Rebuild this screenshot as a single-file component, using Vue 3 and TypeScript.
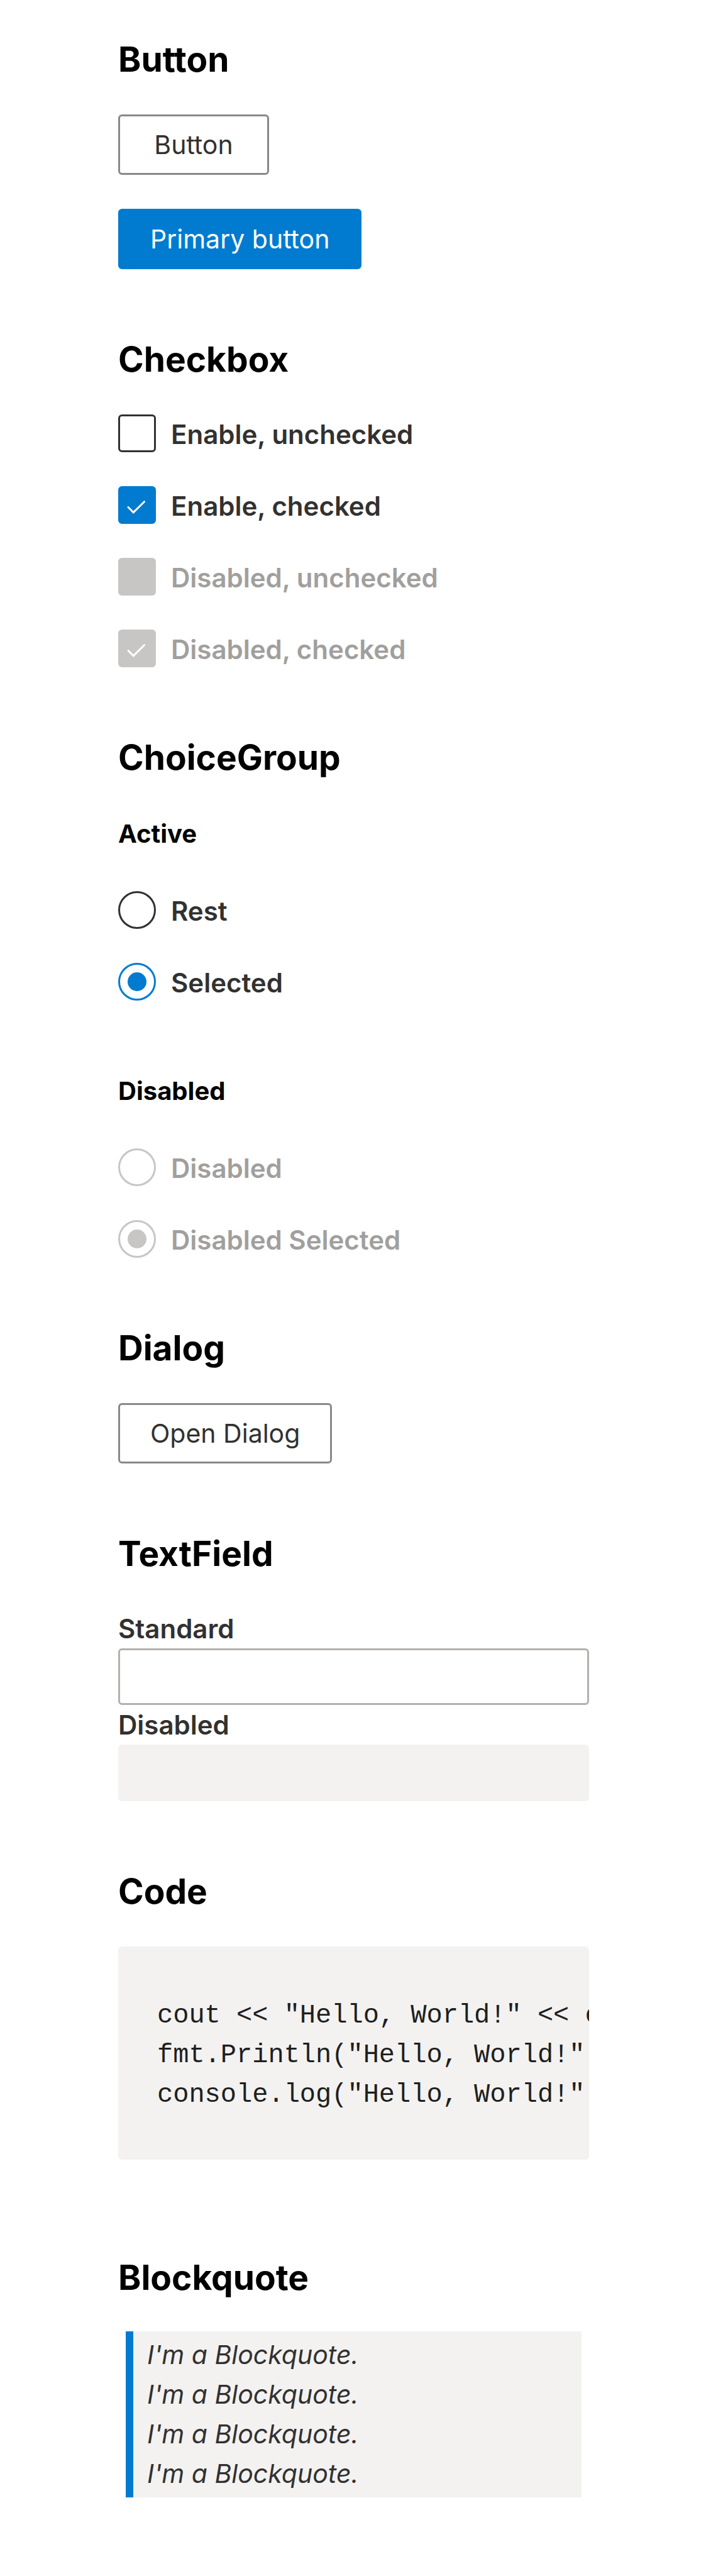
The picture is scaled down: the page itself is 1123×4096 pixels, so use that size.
<script setup lang="ts">
import { ref } from 'vue'

interface Option {
  id: string
  label: string
  checked: boolean
  disabled: boolean
}

const checkboxes = ref<Option[]>([
  { id: 'check-enabled', label: 'Enable, unchecked', checked: false, disabled: false },
  { id: 'check-enabled-on', label: 'Enable, checked', checked: true, disabled: false },
  { id: 'check-disabled', label: 'Disabled, unchecked', checked: false, disabled: true },
  { id: 'check-disabled-on', label: 'Disabled, checked', checked: true, disabled: true },
])

const groups = [
  {
    name: 'active',
    title: 'Active',
    disabled: false,
    options: ['Rest', 'Selected'],
  },
  {
    name: 'disabled',
    title: 'Disabled',
    disabled: true,
    options: ['Disabled', 'Disabled Selected'],
  },
]

const picked = ref<Record<string, string>>({
  active: 'Selected',
  disabled: 'Disabled Selected',
})

const standard = ref('')

const code = [
  'cout << "Hello, World!" << endl;',
  'fmt.Println("Hello, World!")',
  'console.log("Hello, World!")',
].join('\n')
</script>

<template>
  <main class="page">
    <section>
      <h3>Button</h3>
      <div class="stack">
        <button type="button" class="button">Button</button>
        <button type="button" class="button primary">Primary button</button>
      </div>
    </section>

    <section>
      <h3>Checkbox</h3>
      <div class="stack">
        <div v-for="box in checkboxes" :key="box.id" class="option">
          <span class="control">
            <input :id="box.id" v-model="box.checked" type="checkbox" :disabled="box.disabled" />
            <svg v-if="box.checked" class="tick" viewBox="0 0 60 60" aria-hidden="true">
              <path d="M16 33.5 L24.2 41.8 L41.5 24.7" />
            </svg>
          </span>
          <label :for="box.id">{{ box.label }}</label>
        </div>
      </div>
    </section>

    <section>
      <h3>ChoiceGroup</h3>
      <div v-for="group in groups" :key="group.name" class="group">
        <h5>{{ group.title }}</h5>
        <div class="stack">
          <div v-for="(option, i) in group.options" :key="option" class="option">
            <input
              :id="`${group.name}-${i}`"
              v-model="picked[group.name]"
              type="radio"
              :name="group.name"
              :value="option"
              :disabled="group.disabled"
            />
            <label :for="`${group.name}-${i}`">{{ option }}</label>
          </div>
        </div>
      </div>
    </section>

    <section>
      <h3>Dialog</h3>
      <div class="stack">
        <button type="button" class="button">Open Dialog</button>
      </div>
    </section>

    <section class="fields">
      <h3>TextField</h3>
      <label for="field-standard">Standard</label>
      <input id="field-standard" v-model="standard" type="text" />
      <label for="field-disabled">Disabled</label>
      <input id="field-disabled" type="text" disabled />
    </section>

    <section>
      <h3>Code</h3>
      <pre><code>{{ code }}</code></pre>
    </section>

    <section class="quotes">
      <h3>Blockquote</h3>
      <blockquote>
        <p v-for="n in 4" :key="n">I'm a Blockquote.</p>
      </blockquote>
    </section>
  </main>
</template>

<style>
body {
  margin: 0;
  background: #fff;
}
</style>

<style scoped>
.page {
  box-sizing: border-box;
  padding: 60px 186px 125px 188px;
  font-family: Inter, 'Liberation Sans', sans-serif;
  font-size: 41px;
  color: #323130;
}

section + section {
  margin-top: 109px;
}

h3 {
  margin: 0 0 54px;
  font-size: 55px;
  line-height: 68px;
  font-weight: 700;
  color: #000;
}

h5 {
  margin: 0 0 67px;
  font-size: 40px;
  line-height: 48px;
  font-weight: 700;
  color: #000;
}

.stack {
  display: flex;
  flex-direction: column;
  align-items: flex-start;
  gap: 54px;
}

.button {
  box-sizing: border-box;
  height: 96px;
  min-width: 240px;
  padding: 0 48px;
  border: 3px solid #8a8886;
  border-radius: 6px;
  background: #fff;
  font: inherit;
  color: inherit;
}

.button.primary {
  border-color: #007bd0;
  background: #007bd0;
  color: #fff;
}

.option {
  display: flex;
  gap: 24px;
  height: 60px;
}

.option label {
  padding-top: 2px;
  font-size: 42px;
  line-height: 60px;
  font-weight: 600;
}

.control {
  position: relative;
  display: flex;
}

.option input {
  appearance: none;
  box-sizing: border-box;
  width: 60px;
  height: 60px;
  margin: 0;
  border: 3px solid #323130;
  background: #fff;
}

.option input[type='checkbox'] {
  border-radius: 6px;
}

.option input[type='checkbox']:checked {
  border-color: #007bd0;
  background: #007bd0;
}

.option input[type='checkbox']:disabled {
  border-color: #c8c6c4;
  background: #c8c6c4;
}

.tick {
  position: absolute;
  inset: 0;
  fill: none;
  stroke: #fff;
  stroke-width: 3;
  stroke-linecap: round;
  pointer-events: none;
}

.option input[type='radio'] {
  display: grid;
  place-items: center;
  border-radius: 50%;
}

.option input[type='radio']:checked {
  border-color: #007bd0;
}

.option input[type='radio']:checked::before {
  content: '';
  width: 30px;
  height: 30px;
  border-radius: 50%;
  background: #007bd0;
}

.option input[type='radio']:disabled {
  border-color: #c8c6c4;
}

.option input[type='radio']:disabled::before {
  background: #c8c6c4;
}

.option input:disabled ~ label,
.option .control:has(input:disabled) + label {
  color: #a19f9d;
}

.group {
  margin-top: 64px;
}

.group + .group {
  margin-top: 120px;
}

h3:has(+ .group) {
  margin-bottom: 0;
}

.quotes h3 {
  margin-bottom: 52px;
}

.fields label {
  display: block;
  font-size: 42px;
  line-height: 63px;
  font-weight: 600;
}

.fields input {
  display: block;
  box-sizing: border-box;
  width: 100%;
  height: 90px;
  padding: 0 24px;
  border: 3px solid #b3b0ad;
  border-radius: 6px;
  background: #fff;
  font: inherit;
  color: inherit;
}

.fields input:disabled {
  border-color: #f3f2f1;
  background: #f3f2f1;
}

pre {
  margin: 0;
  padding: 79px 62px 71px;
  overflow: hidden;
  border-radius: 6px;
  background: #f3f2f1;
  color: #201f1e;
  font-size: 42px;
  line-height: 63px;
}

code {
  display: block;
  font-family: 'Liberation Mono', monospace;
}

section.quotes {
  margin-top: 153px;
}

blockquote {
  margin: 0 12px;
  padding: 6px 22px;
  border-left: 12px solid #007bd0;
  background: #f3f2f1;
  font-style: italic;
  line-height: 63px;
}

blockquote p {
  margin: 0;
}
</style>
